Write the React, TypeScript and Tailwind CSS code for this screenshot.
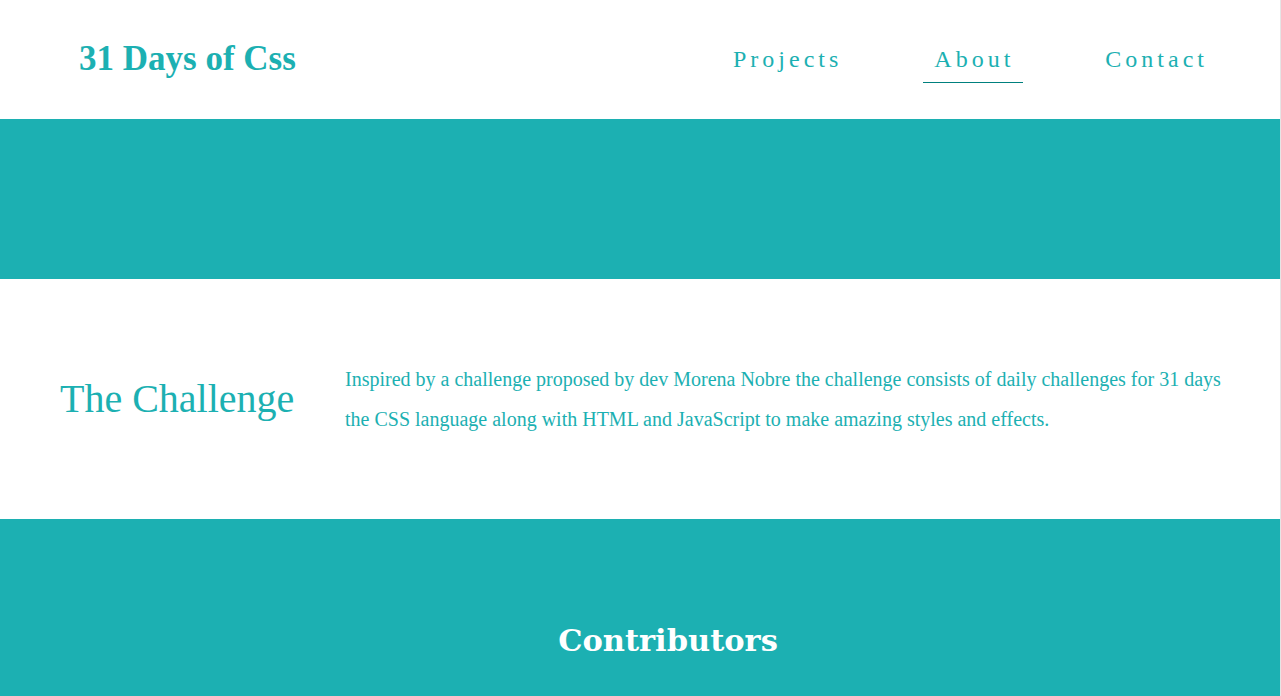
export default function App() {
	const links = [
		{ label: 'Projects', gap: '' },
		{ label: 'About', gap: 'ml-[72px]' },
		{ label: 'Contact', gap: 'ml-[71px]' }
	];

	return (
		<div className="min-h-[696px] w-full border-r border-[#e5e5e5] bg-white font-['Liberation_Serif',serif] text-[#1cb0b2]">
			<header className="flex h-[119px] items-start justify-between pl-[79px] pr-[63px]">
				<h1 className="pt-[41px] text-[35px] font-bold leading-none">31 Days of Css</h1>
				<nav className="flex pt-[47px]">
					{links.map((link) => (
						<a
							key={link.label}
							href="#"
							className={
								link.label === 'About'
									? `${link.gap} border-b border-[#00807e] pb-[11px] pl-[11px] pr-[9px] text-[24px] leading-none tracking-[4px]`
									: `${link.gap} border-b border-transparent pb-[11px] pl-[11px] pr-[9px] text-[24px] leading-none tracking-[4px]`
							}
						>
							{link.label}
						</a>
					))}
				</nav>
			</header>

			<div className="h-[160px] bg-[#1cb0b2]" />

			<section className="flex h-[240px] items-center pl-[60px] pr-[50px]">
				<h2 className="w-[285px] shrink-0 text-[40px] leading-none">The Challenge</h2>
				<p className="text-[20px] leading-[40px]">
					Inspired by a challenge proposed by dev Morena Nobre the challenge consists of daily challenges for 31 days
					the CSS language along with HTML and JavaScript to make amazing styles and effects.
				</p>
			</section>

			<section className="flex min-h-[177px] justify-center bg-[#1cb0b2] pl-[56px] pt-[101px]">
				<h2 className="font-['DejaVu_Serif',serif] text-[30.5px] font-bold leading-[40px] text-white">Contributors</h2>
			</section>
		</div>
	);
}
